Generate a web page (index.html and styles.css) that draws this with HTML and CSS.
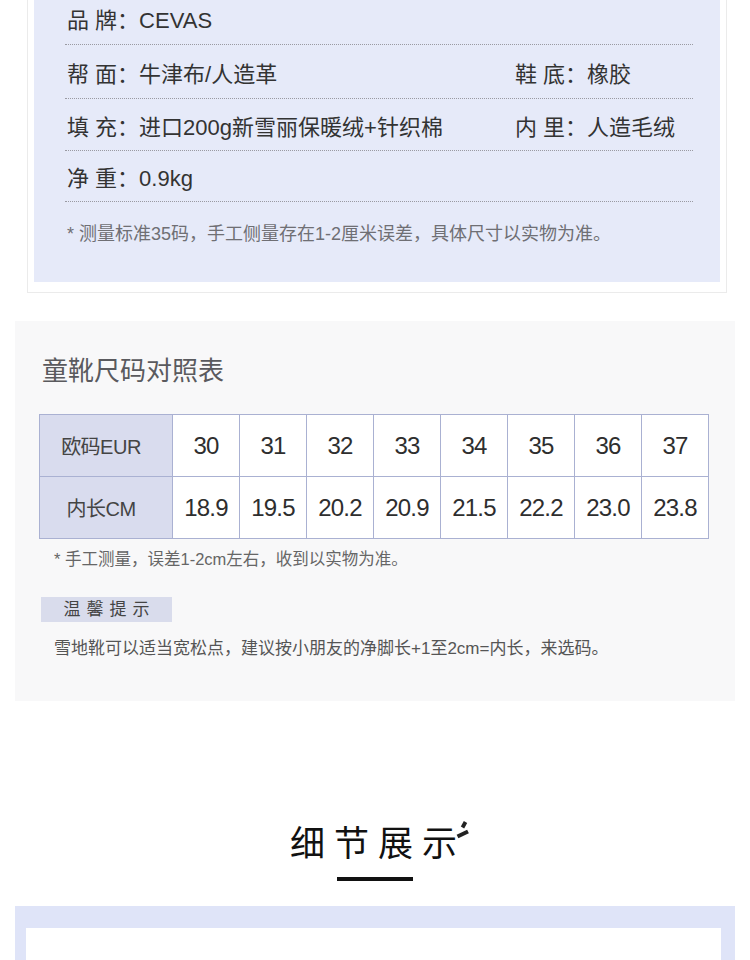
FILE: index.html
```html
<!DOCTYPE html>
<html lang="zh-CN">
<head>
<meta charset="utf-8">
<title>商品详情</title>
<link rel="stylesheet" href="styles.css">
</head>
<body>
<div class="page">
  <section class="spec-card">
    <div class="spec-panel">
      <div class="spec-row">
        <div class="spec-cell">品 牌：CEVAS</div>
      </div>
      <div class="spec-row">
        <div class="spec-cell spec-cell-main">帮 面：牛津布/人造革</div>
        <div class="spec-cell">鞋 底：橡胶</div>
      </div>
      <div class="spec-row">
        <div class="spec-cell spec-cell-main">填 充：进口200g新雪丽保暖绒+针织棉</div>
        <div class="spec-cell">内 里：人造毛绒</div>
      </div>
      <div class="spec-row">
        <div class="spec-cell">净 重：0.9kg</div>
      </div>
      <p class="spec-note">* 测量标准35码，手工侧量存在1-2厘米误差，具体尺寸以实物为准。</p>
    </div>
  </section>

  <section class="size-section">
    <h2 class="size-title">童靴尺码对照表</h2>
    <table class="size-table">
      <tr>
        <th>欧码EUR</th>
        <td>30</td><td>31</td><td>32</td><td>33</td><td>34</td><td>35</td><td>36</td><td>37</td>
      </tr>
      <tr>
        <th>内长CM</th>
        <td>18.9</td><td>19.5</td><td>20.2</td><td>20.9</td><td>21.5</td><td>22.2</td><td>23.0</td><td>23.8</td>
      </tr>
    </table>
    <p class="size-note">* 手工测量，误差1-2cm左右，收到以实物为准。</p>
    <div class="tip-label">温馨提示</div>
    <p class="tip-text">雪地靴可以适当宽松点，建议按小朋友的净脚长+1至2cm=内长，来选码。</p>
  </section>

  <section class="detail-head">
    <h2 class="detail-title">细节展示<svg class="detail-mark" width="16" height="20" viewBox="0 0 16 20"><path d="M10.5 1 L7.5 6.5" stroke="#222" stroke-width="3.8" stroke-linecap="butt"/><path d="M2.5 15.5 L13 10.5" stroke="#222" stroke-width="4" stroke-linecap="butt"/></svg></h2>
    <div class="detail-bar"></div>
  </section>

  <section class="detail-frame">
    <div class="detail-inner"></div>
  </section>
</div>
</body>
</html>
```

FILE: styles.css
```css
html, body {
  margin: 0;
  padding: 0;
  background: #ffffff;
}
body {
  font-family: "Liberation Sans", "Noto Sans CJK SC", sans-serif;
  color: #333;
  overflow: hidden;
}
.page {
  width: 750px;
  height: 960px;
  overflow: hidden;
}

/* spec card */
.spec-card {
  margin: -20px 23px 0 27px;
  border: 1px solid #ebebeb;
  padding: 0 6px 10px 6px;
  background: #fff;
}
.spec-panel {
  background: #e6eaf9;
  padding: 11px 27px 38px 31px;
}
.spec-row {
  display: flex;
  height: 52px;
  align-items: center;
  border-bottom: 1px dotted #9a9aa2;
  font-size: 22px;
  color: #333;
  padding-left: 2px;
}
.spec-row:nth-child(2) {
  height: 53px;
}
.spec-row:nth-child(3) {
  height: 51px;
}
.spec-row:nth-child(4) {
  height: 50px;
}
.spec-cell {
  white-space: nowrap;
}
.spec-cell-main {
  width: 448px;
}
.spec-note {
  margin: 22px 0 0 2px;
  font-size: 18px;
  line-height: 20px;
  color: #6f6f74;
}

/* size section */
.size-section {
  margin: 28px 15px 0 15px;
  background: #f8f8f9;
  padding: 32px 26px 42px 24px;
}
.size-title {
  margin: 0 0 25px 3px;
  font-size: 26px;
  line-height: 36px;
  font-weight: normal;
  color: #5a5a5e;
}
.size-table {
  width: 670px;
  border-collapse: collapse;
  table-layout: fixed;
  border: 1px solid #a9b0d2;
}
.size-table th,
.size-table td {
  border: 1px solid #aab1d2;
  height: 61px;
  padding: 0;
  text-align: center;
  background: #fff;
}
.size-table th {
  width: 132px;
  background: #d9dcee;
  font-weight: normal;
  font-size: 20px;
  color: #444;
  letter-spacing: -0.5px;
  text-indent: -10px;
}
.size-table td {
  font-size: 24px;
  color: #2e2e2e;
  letter-spacing: -0.8px;
}
.size-note {
  margin: 10px 0 0 15px;
  font-size: 16.5px;
  line-height: 20px;
  color: #666;
}
.tip-label {
  margin: 28px 0 0 2px;
  width: 131px;
  height: 25px;
  background: #d9dcec;
  text-align: center;
  font-size: 17px;
  line-height: 25px;
  letter-spacing: 6px;
  text-indent: 6px;
  color: #444;
}
.tip-text {
  margin: 17px 0 0 15px;
  font-size: 17px;
  line-height: 20px;
  color: #555;
}

/* detail header */
.detail-head {
  margin-top: 115px;
  display: flex;
  flex-direction: column;
  align-items: center;
}
.detail-title {
  position: relative;
  margin: 0;
  font-family: "Noto Sans CJK SC", sans-serif;
  font-size: 35px;
  line-height: 50px;
  font-weight: 400;
  letter-spacing: 9px;
  color: #111;
  padding-left: 6px;
}
.detail-mark {
  position: absolute;
  right: -5px;
  top: 5px;
}
.detail-bar {
  margin-top: 11px;
  width: 76px;
  height: 4px;
  background: #111;
}

.detail-frame {
  margin: 25px 15px 0 15px;
  background: #dfe4f8;
  padding: 22px 14px 0 11px;
}
.detail-inner {
  height: 100px;
  background: #fff;
}
```
